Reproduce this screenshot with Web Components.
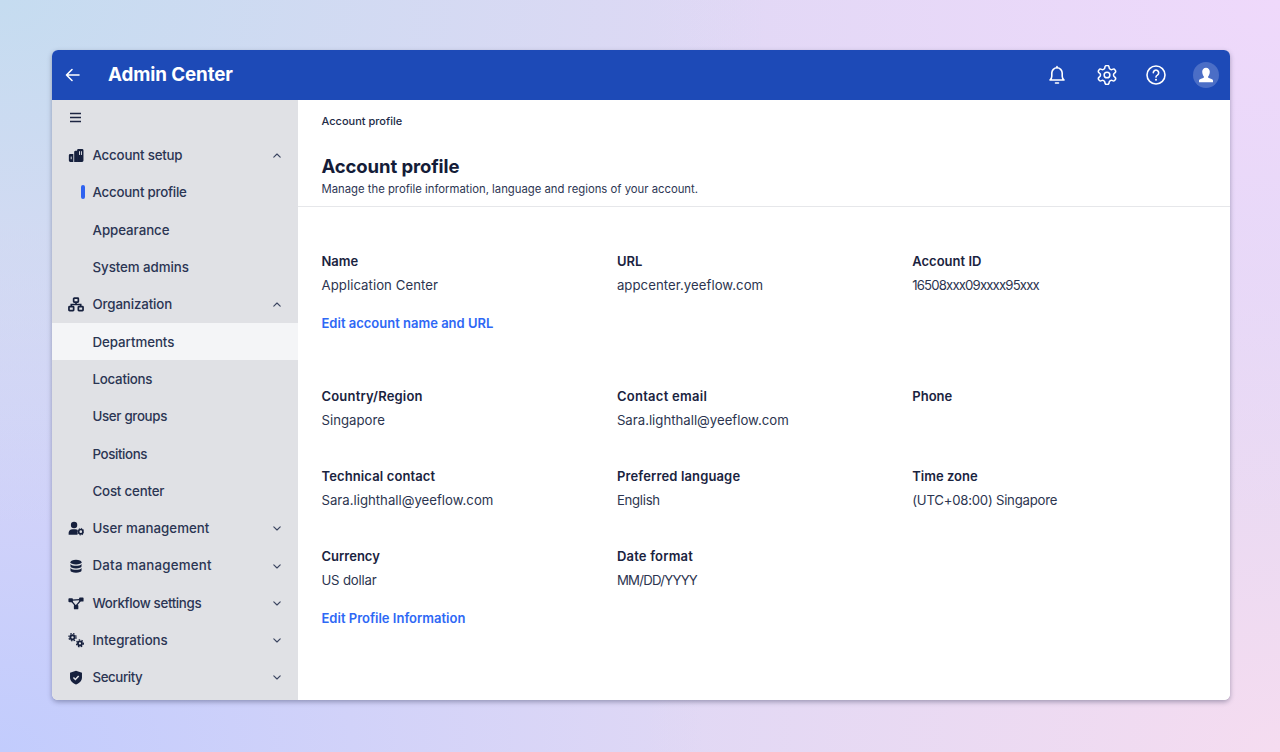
<!DOCTYPE html>
<html lang="en"><head><meta charset="utf-8"><title>Admin Center</title>
<style>
html,body{margin:0;height:100%}
body{height:752px;overflow:hidden;box-sizing:border-box;padding:50px 50px 52px 52px;font-family:Inter,"Liberation Sans",sans-serif;color:#1a2340;
background:radial-gradient(ellipse 60% 70% at 0 0,#c5dcf0 0,#c5dcf000 100%),radial-gradient(ellipse 55% 70% at 0 100%,#c2ccfd 0,#c2ccfd00 100%),radial-gradient(ellipse 50% 70% at 100% 0,#efd9fb 0,#efd9fb00 100%),radial-gradient(ellipse 50% 70% at 100% 100%,#f5dcf0 0,#f5dcf000 100%),#e0d8f5}
</style></head><body>
<admin-window>
  <admin-header slot="header" title-text="Admin Center"></admin-header>
  <side-nav slot="nav">
    <nav-item kind="toggle"></nav-item>
    <nav-item icon="setup" chevron="up" style="letter-spacing:-.2px">Account setup</nav-item>
    <nav-item kind="sub" active style="letter-spacing:-.22px">Account profile</nav-item>
    <nav-item kind="sub">Appearance</nav-item>
    <nav-item kind="sub">System admins</nav-item>
    <nav-item icon="org" chevron="up" style="letter-spacing:-.13px">Organization</nav-item>
    <nav-item kind="sub" hover>Departments</nav-item>
    <nav-item kind="sub" style="letter-spacing:-.25px">Locations</nav-item>
    <nav-item kind="sub" style="letter-spacing:-.32px">User groups</nav-item>
    <nav-item kind="sub" style="letter-spacing:-.38px">Positions</nav-item>
    <nav-item kind="sub" style="letter-spacing:-.19px">Cost center</nav-item>
    <nav-item icon="user" chevron="down" style="letter-spacing:.02px">User management</nav-item>
    <nav-item icon="data" chevron="down" style="letter-spacing:.22px">Data management</nav-item>
    <nav-item icon="flow" chevron="down" style="letter-spacing:-.35px">Workflow settings</nav-item>
    <nav-item icon="gears" chevron="down">Integrations</nav-item>
    <nav-item icon="shield" chevron="down" style="letter-spacing:-.42px">Security</nav-item>
  </side-nav>
  <profile-page slot="main">
    <field-grid>
      <info-field label="Name" style="--v:.05px">Application Center</info-field>
      <info-field label="URL" style="--v:.05px">appcenter.yeeflow.com</info-field>
      <info-field label="Account ID" style="--v:-.85px">16508xxx09xxxx95xxx</info-field>
      <edit-link>Edit account name and URL</edit-link>
    </field-grid>
    <field-grid second>
      <info-field label="Country/Region" style="--l:.18px">Singapore</info-field>
      <info-field label="Contact email" style="--l:.27px">Sara.lighthall@yeeflow.com</info-field>
      <info-field label="Phone"></info-field>
      <info-field label="Technical contact" style="--l:.12px">Sara.lighthall@yeeflow.com</info-field>
      <info-field label="Preferred language" style="--l:.14px;--v:-.28px">English</info-field>
      <info-field label="Time zone" style="--v:-.24px">(UTC+08:00) Singapore</info-field>
      <info-field label="Currency" style="--v:-.2px">US dollar</info-field>
      <info-field label="Date format" style="--l:.2px;--v:-.75px">MM/DD/YYYY</info-field>
      <info-field></info-field>
      <edit-link>Edit Profile Information</edit-link>
    </field-grid>
  </profile-page>
</admin-window>
<script>
const ICONS={
 setup:'<path d="M.8 6.800a1.300 1.300 0 0 1 1.300-1.300H5V13H2.100A1.300 1.300 0 0 1 .8 11.700z" fill="currentColor"/><path d="M5.800 3.800a1.300 1.300 0 0 1 1.300-1.300H9V13H5.800z" fill="currentColor"/><path d="M8.500 2.100A1.300 1.300 0 0 1 9.800.8h3.400a1.300 1.300 0 0 1 1.300 1.300v9.600a1.300 1.300 0 0 1-1.300 1.300H8.500z" fill="currentColor"/><path d="M3 8v2.500M10.800 3v3.500M12.600 3v3.500" stroke="#e0e1e5" stroke-width=".9"/>',
 org:'<g fill="none" stroke="currentColor" stroke-width="1.600"><rect x="5.300" y="1" width="4.400" height="3.700" rx=".6"/><rect x=".9" y="9" width="4.400" height="3.800" rx=".6"/><rect x="9.700" y="9" width="4.400" height="3.800" rx=".6"/><path d="M7.500 4.700V7M3.100 9V7h8.800v2"/></g>',
 user:'<circle cx="5.700" cy="3.700" r="3" fill="currentColor"/><path d="M.6 12.800V11c0-2 1.600-3.400 3.600-3.400h2.800c.8 0 1.400.2 1.900.5v4.700z" fill="currentColor"/><circle cx="12" cy="10" r="2" fill="none" stroke="currentColor" stroke-width="1.500"/><circle cx="12" cy="10" r="3.100" fill="none" stroke="currentColor" stroke-width=".9" stroke-dasharray="1.200 1.200"/>',
 data:'<g fill="currentColor"><ellipse cx="7.500" cy="2.900" rx="5.200" ry="2.300"/><path d="M2.300 4.600c1 1.300 3.200 1.800 5.200 1.800s4.200-.5 5.200-1.800v2.200c0 1.200-2.300 2.100-5.200 2.100s-5.200-.9-5.200-2.100z"/><path d="M2.300 8.300c1 1.300 3.200 1.800 5.200 1.800s4.200-.5 5.200-1.800v2.400c0 1.200-2.300 2.100-5.200 2.100s-5.200-.9-5.200-2.100z"/></g>',
 flow:'<g fill="currentColor"><rect x=".4" y="2" width="4.200" height="3.800" rx=".8"/><rect x="10.400" y="1.400" width="4.200" height="3.800" rx=".8"/><rect x="5.500" y="8.400" width="4.200" height="4" rx=".8"/></g><path d="M4 3.800l7-.4M3.500 5l3.800 4.500" stroke="currentColor" stroke-width="1.300"/><path d="M7.700 9l3.800-4.500" stroke="currentColor" stroke-width="1.300"/>',
 gears:'<circle cx="4.200" cy="4" r="2" fill="none" stroke="currentColor" stroke-width="1.800"/><circle cx="4.200" cy="4" r="3.400" fill="none" stroke="currentColor" stroke-width="1.200" stroke-dasharray="1.400 1.300"/><circle cx="11.200" cy="9.700" r="1.900" fill="none" stroke="currentColor" stroke-width="1.700"/><circle cx="11.200" cy="9.700" r="3.200" fill="none" stroke="currentColor" stroke-width="1.200" stroke-dasharray="1.400 1.300"/>',
 shield:'<path d="M7.500 .6l5.600 2v4.100c0 3.200-2.300 5.600-5.600 6.900-3.300-1.300-5.600-3.700-5.600-6.900V2.600z" fill="currentColor"/><path d="M5.100 7l1.800 1.800 3.100-3.300" fill="none" stroke="#e0e1e5" stroke-width="1.400"/>'
};
function def(name,css,html,init){customElements.define(name,class extends HTMLElement{
  connectedCallback(){if(this.shadowRoot)return;const r=this.attachShadow({mode:'open'});r.innerHTML='<style>'+css+'</style>'+(typeof html==='function'?html(this):html);if(init)init(this,r)}
})}
def('admin-window',`:host{display:grid;grid-template:50px 600px/246px 1fr;grid-template-areas:"h h" "n m";height:650px;border-radius:6px;overflow:hidden;background:#fff;box-shadow:0 2px 5px rgba(40,45,80,.38)}
::slotted([slot=header]){grid-area:h}::slotted([slot=nav]){grid-area:n}::slotted([slot=main]){grid-area:m}`,
`<slot name="header"></slot><slot name="nav"></slot><slot name="main"></slot>`);
def('admin-header',`:host{display:flex;align-items:center;background:#1d4ab7;color:#fff;padding:0 11px 0 13px;box-sizing:border-box}
h1{font:700 18.800px/1 Inter,sans-serif;letter-spacing:-.1px;margin:0 0 0 28px;flex:1}
svg{display:block;fill:none;stroke:#fff;stroke-width:1.600;stroke-linecap:round;stroke-linejoin:round}
.acts{display:flex;align-items:center;gap:29.600px}
.av{width:26px;height:26px;border-radius:50%;background:#4b6ec6;display:grid;place-items:center;margin-left:-3px}`,
t=>`<svg width="15" height="14" viewBox="0 0 15 14"><path d="M14 7H1.500M7 1.500 1.500 7 7 12.500"/></svg><h1>${t.getAttribute('title-text')}</h1>
<div class="acts">
<svg width="20" height="20" viewBox="0 0 20 20"><path d="M3 15c1-1 1.800-2.200 1.800-3.800V8a5.200 5.200 0 0 1 10.400 0v3.200c0 1.600.8 2.800 1.800 3.800z"/><path d="M8.500 18h3M10 1.500v1.200"/></svg>
<svg width="20" height="20" viewBox="1.500 1.500 21 21"><path d="M12.220 2h-.44a2 2 0 0 0-2 2v.18a2 2 0 0 1-1 1.730l-.43.250a2 2 0 0 1-2 0l-.15-.08a2 2 0 0 0-2.730.730l-.22.380a2 2 0 0 0 .730 2.730l.15.100a2 2 0 0 1 1 1.720v.510a2 2 0 0 1-1 1.740l-.15.090a2 2 0 0 0-.730 2.730l.22.380a2 2 0 0 0 2.730.730l.15-.08a2 2 0 0 1 2 0l.43.250a2 2 0 0 1 1 1.730V20a2 2 0 0 0 2 2h.44a2 2 0 0 0 2-2v-.18a2 2 0 0 1 1-1.730l.43-.25a2 2 0 0 1 2 0l.15.08a2 2 0 0 0 2.730-.730l.22-.39a2 2 0 0 0-.730-2.730l-.15-.08a2 2 0 0 1-1-1.740v-.5a2 2 0 0 1 1-1.740l.15-.09a2 2 0 0 0 .730-2.730l-.22-.38a2 2 0 0 0-2.730-.730l-.15.08a2 2 0 0 1-2 0l-.43-.25a2 2 0 0 1-1-1.730V4a2 2 0 0 0-2-2z"/><circle cx="12" cy="12" r="3"/></svg>
<svg width="20" height="20" viewBox="0 0 20 20"><circle cx="10" cy="10" r="9"/><path d="M7.300 7.800a2.700 2.700 0 1 1 4.100 2.300c-.9.500-1.400 1-1.400 2"/><path d="M10 14.700v.1" stroke-width="2"/></svg>
<div class="av"><svg width="16" height="16" viewBox="0 0 16 16"><path d="M8 .8c2.300 0 3.800 1.700 3.800 4S10.700 9 10 9.700c0 .8.500 1.200 1.500 1.500 2 .6 3.500 1.200 3.500 2.300v1.700H1v-1.700c0-1.100 1.500-1.700 3.500-2.300C5.500 10.900 6 10.500 6 9.700 5.300 9 4.200 7 4.200 4.800S5.700.8 8 .8z" fill="#fff" stroke="none"/></svg></div>
</div>`);
def('side-nav',`:host{display:block;background:#e0e1e5;padding-top:.2px;overflow:hidden}`,`<slot></slot>`);
def('nav-item',`:host{display:flex;align-items:center;height:37.300px;padding:.9px 17px 0 15.500px;position:relative;color:#2b3553;font:500 13.300px/1 Inter,sans-serif;letter-spacing:-.05px;box-sizing:border-box}
:host([hover]){background:#f4f5f7}
:host([kind=toggle]){height:36.500px;padding-bottom:2px;padding-top:0}
.ic{width:16px;height:15px;margin-right:9px;color:#16203d;display:block;flex:none}
.lead{width:25px;flex:none}
.t{flex:1}
.bar{position:absolute;left:28.500px;top:11.500px;width:4px;height:14px;border-radius:2px;background:#2f62f0}
.chev{width:8px;height:5px;fill:none;stroke:#3a4460;stroke-width:1.400;stroke-linecap:round;stroke-linejoin:round}
.ham{width:11px;height:11px;margin-left:2px;fill:none;stroke:#1c2542;stroke-width:1.500}`,
t=>{const k=t.getAttribute('kind');
 if(k==='toggle')return `<svg class="ham" viewBox="0 0 11 11"><path d="M0 1.500h11M0 5.500h11M0 9.500h11"/></svg>`;
 if(k==='sub')return `<span class="lead"></span>${t.hasAttribute('active')?'<i class="bar"></i>':''}<span class="t"><slot></slot></span>`;
 const up=t.getAttribute('chevron')==='up';
 return `<svg class="ic" viewBox="0 0 15 14">${ICONS[t.getAttribute('icon')]}</svg><span class="t"><slot></slot></span><svg class="chev" viewBox="0 0 10 6.250"><path d="${up?'M1 5.250l4-4 4 4':'M1 1l4 4 4-4'}"/></svg>`;
});
def('profile-page',`:host{display:block;background:#fff;color:#1a2340}
.crumb{font:500 11px/1 Inter,sans-serif;padding:16px 0 0 23.500px;color:#222b47;height:21px}
header{padding:18px 23.500px 0;border-bottom:1px solid #e6e7ea;height:70px;box-sizing:border-box;margin-bottom:44px}
h2{font:700 18.500px/22px Inter,sans-serif;letter-spacing:-.1px;margin:0 0 4px;color:#141c38}
p{margin:0;font:400 11.300px/16px Inter,sans-serif;color:#2d3653}`,
`<div class="crumb">Account profile</div><header><h2>Account profile</h2><p>Manage the profile information, language and regions of your account.</p></header><slot></slot>`);
def('field-grid',`:host{display:grid;grid-template-columns:repeat(3,295.400px);row-gap:30px;padding-left:23.500px}
:host([second]){margin-top:53px}`,`<slot></slot>`);
def('info-field',`:host{display:block;height:50px}
.l{font:600 13px/20px Inter,sans-serif;color:#1a2340;margin-bottom:4px;letter-spacing:var(--l,0)}
.v{font:400 13.200px/20px Inter,sans-serif;color:#2c3550;letter-spacing:var(--v,0)}`,
t=>`<div class="l">${t.getAttribute('label')||''}</div><div class="v"><slot></slot></div>`);
def('edit-link',`:host{display:block;grid-column:1/-1;margin-top:-18px;height:20px;font:600 13px/20px Inter,sans-serif;color:#2e68f5}`,`<slot></slot>`);
</script>
</body></html>
